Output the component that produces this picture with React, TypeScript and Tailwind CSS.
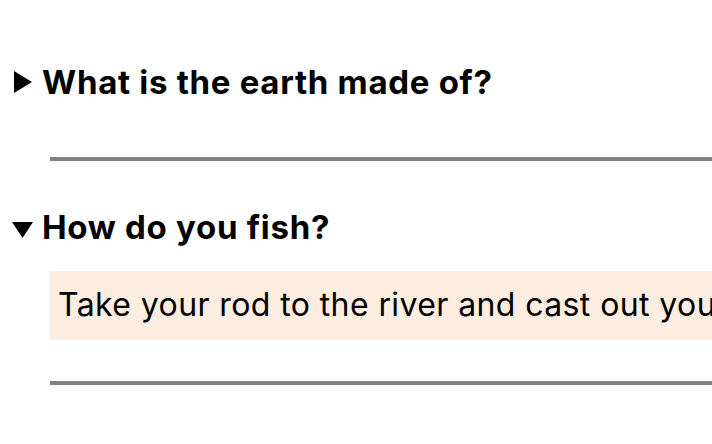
import { useState } from 'react';

const faqs = [
  { q: 'What is the earth made of?', a: 'Rock, metal, water and a thin layer of air on the outside.' },
  { q: 'How do you fish?', a: 'Take your rod to the river and cast out your line, then wait for a bite.' },
];

const Marker = ({ open }: { open: boolean }) => (
  <svg width="24" height="40" viewBox="0 0 24 40" className="shrink-0">
    {open ? <polygon points="2,15 23,15 12.5,31" fill="#000" /> : <polygon points="4,9 22,20 4,31" fill="#000" />}
  </svg>
);

export default function App() {
  const [open, setOpen] = useState<boolean[]>([false, true]);

  const toggle = (i: number) => setOpen((o) => o.map((v, j) => (j === i ? !v : v)));

  return (
    <div className="w-[712px] h-[444px] overflow-hidden bg-white text-black pt-[62px]" style={{ fontFamily: 'Inter, "Noto Sans", sans-serif' }}>
      {faqs.map((f, i) => (
        <div key={f.q} className={i === 0 ? '' : 'mt-[46px]'}>
          <button
            onClick={() => toggle(i)}
            className="flex items-center pl-[10px] h-[40px] text-[33px] leading-[40px] font-bold tracking-[0.7px]"
          >
            <Marker open={open[i]} />
            <span className="ml-[8px] whitespace-nowrap">{f.q}</span>
          </button>
          {open[i] ? (
            <>
              <div className="ml-[50px] mt-[24px] h-[69px] bg-[#fcede0] pl-[8px] pt-[14px] overflow-hidden whitespace-nowrap text-[32px] leading-[40px] tracking-[0.4px]">
                {f.a}
              </div>
              <div className="ml-[50px] mt-[41px] h-[4px] bg-[#808080]" />
            </>
          ) : (
            <div className="ml-[50px] mt-[55px] h-[4px] bg-[#808080]" />
          )}
        </div>
      ))}
    </div>
  );
}
